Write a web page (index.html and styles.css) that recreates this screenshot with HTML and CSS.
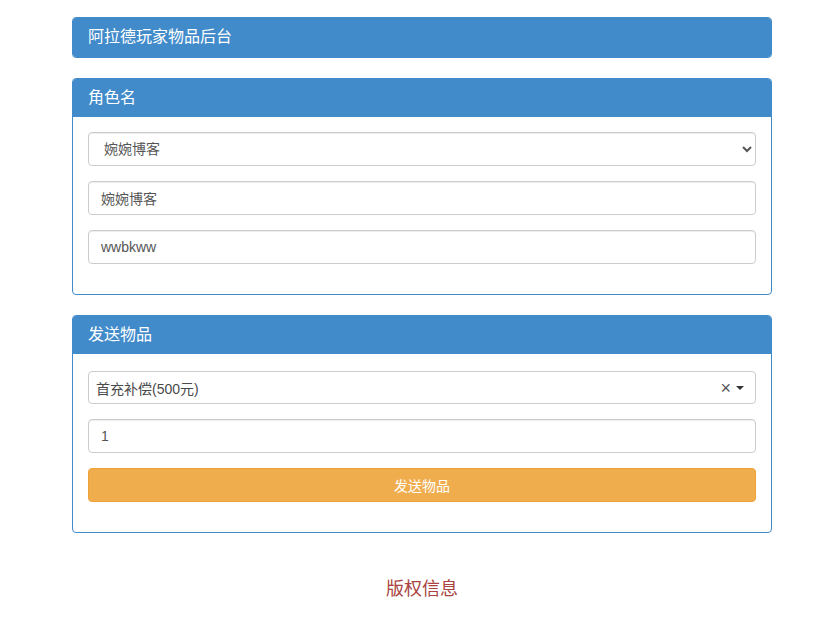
FILE: index.html
```html
<!DOCTYPE html>
<html lang="zh-CN">
<head>
<meta charset="utf-8">
<title>阿拉德玩家物品后台</title>
<link rel="stylesheet" href="styles.css">
</head>
<body>
<div class="page">
  <div class="panel panel-top">
    <div class="panel-heading">阿拉德玩家物品后台</div>
  </div>

  <div class="panel">
    <div class="panel-heading">角色名</div>
    <div class="panel-body">
      <div class="form-group">
        <select class="form-control">
          <option>婉婉博客</option>
        </select>
      </div>
      <div class="form-group">
        <input class="form-control" type="text" value="婉婉博客">
      </div>
      <div class="form-group">
        <input class="form-control" type="text" value="wwbkww">
      </div>
    </div>
  </div>

  <div class="panel">
    <div class="panel-heading">发送物品</div>
    <div class="panel-body">
      <div class="form-group">
        <div class="select2">
          <span class="select2-text">首充补偿(500元)</span>
          <span class="select2-clear">×</span>
          <span class="select2-arrow"></span>
        </div>
      </div>
      <div class="form-group">
        <input class="form-control" type="text" value="1">
      </div>
      <div class="form-group">
        <button class="btn-warning" type="button">发送物品</button>
      </div>
    </div>
  </div>

  <div class="footer">版权信息</div>
</div>
</body>
</html>
```

FILE: styles.css
```css
* { box-sizing: border-box; }
html, body { margin: 0; padding: 0; background: #fff; }
body {
  font-family: "Liberation Sans", "Noto Sans CJK SC", sans-serif;
  font-size: 14px;
  color: #333;
}
.page {
  width: 700px;
  margin: 0 0 0 72px;
  padding-top: 17px;
}
.panel {
  border: 1px solid #428bca;
  border-radius: 4px;
  margin-bottom: 20px;
  background: #fff;
  overflow: hidden;
}
.panel-top { margin-bottom: 20px; }
.panel-heading {
  background: #428bca;
  color: #fff;
  font-size: 16px;
  line-height: 18px;
  padding: 10px 15px 10px 15px;
}
.panel-top .panel-heading { height: 39px; padding-top: 10px; }
.panel-body { padding: 15px 15px 15px; }
.form-group { margin-bottom: 15px; }
.form-control {
  display: block;
  width: 100%;
  height: 34px;
  padding: 6px 12px;
  font-family: "Liberation Sans", "Noto Sans CJK SC", sans-serif;
  font-size: 14px;
  color: #555;
  background: #fff;
  border: 1px solid #ccc;
  border-radius: 4px;
  box-shadow: inset 0 1px 1px rgba(0,0,0,.075);
  outline: none;
}
select.form-control { padding: 6px 8px 6px 11px; }
.select2 {
  margin-top: 2px;
  height: 33px;
  border: 1px solid #ccc;
  border-radius: 4px;
  display: flex;
  align-items: center;
  padding: 0 11px 0 7px;
  color: #4a4a4a;
}
.select2-text { flex: 1; font-size: 14px; }
.select2-clear {
  font-size: 18px;
  color: #555;
  line-height: 1;
  margin-right: 5px;
  margin-top: 1px;
}
.select2-arrow {
  width: 0;
  height: 0;
  border-left: 4px solid transparent;
  border-right: 4px solid transparent;
  border-top: 4px solid #333;
}
.btn-warning {
  display: block;
  width: 100%;
  height: 34px;
  background: #f0ad4e;
  border: 1px solid #eea236;
  border-radius: 4px;
  color: #fff;
  font-family: "Liberation Sans", "Noto Sans CJK SC", sans-serif;
  font-size: 14px;
  padding: 0;
}
.footer {
  text-align: center;
  color: #a94442;
  font-size: 18px;
  margin-top: 41px;
}
```
